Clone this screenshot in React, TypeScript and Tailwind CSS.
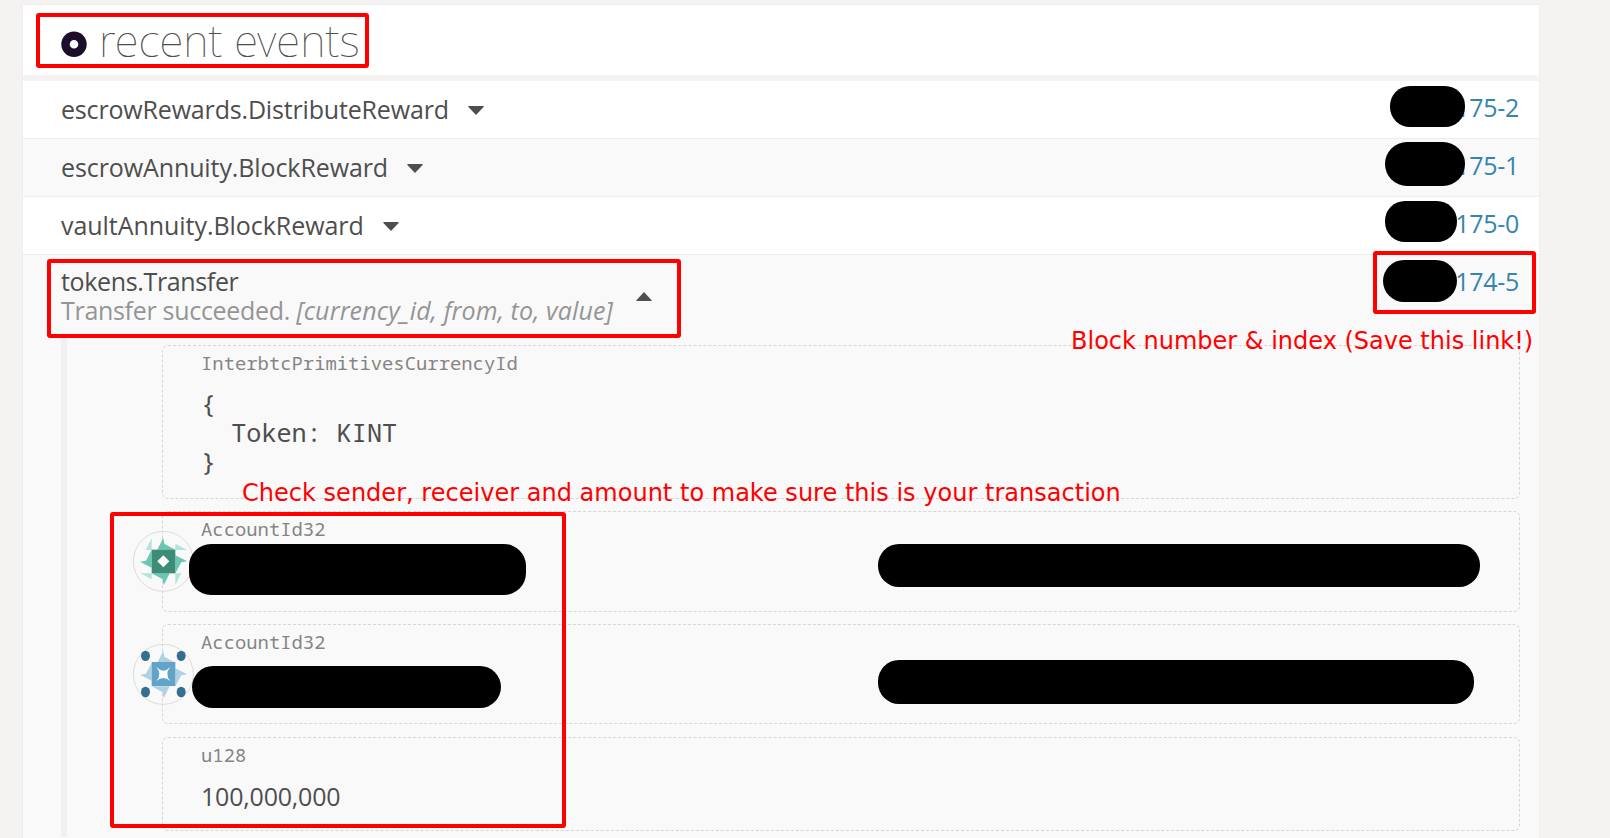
import type { ReactNode } from "react";

function Caret({ up = false }: { up?: boolean }) {
  return (
    <svg className="mt-[2px] h-[9px] w-[16px] shrink-0 fill-[#4e4e4e]" viewBox="0 0 16 9">
      <path d={up ? "M8 0 15.6 8.2V9H.4V8.2Z" : "M.4 0H15.6V.9L8 9 .4 .9Z"} />
    </svg>
  );
}

const pinwheel =
  "M100 29 103 47 136 65H82ZM172 100 154 103 136 136V82ZM101 172 98 154 65 136H119ZM30 101 48 98 65 65V119Z";

function SenderIcon() {
  return (
    <svg className="absolute top-[16px] -left-[33px] size-[66px]" viewBox="0 0 198 198">
      <circle cx="100" cy="100" r="90" fill="none" stroke="#dddddd" strokeWidth="3" />
      <path
        fill="#b2e5da"
        d="M65 30V66H47ZM136 47 171 66H136ZM136 136H154L136 171ZM31 136H65V154Z"
      />
      <path fill="#6bc6b4" d={pinwheel} />
      <path fill="#3d8c78" d="M65 65H136V136H65Z" />
      <path fill="#fff" d="M100 82 118 100 100 118 82 100Z" />
    </svg>
  );
}

function ReceiverIcon() {
  return (
    <svg className="absolute top-[16px] -left-[33px] size-[66px]" viewBox="0 0 198 198">
      <circle cx="100" cy="100" r="90" fill="none" stroke="#dddddd" strokeWidth="3" />
      <path fill="#b0d1e3" d={pinwheel} />
      <g fill="#356f8f">
        <ellipse cx="46.5" cy="44.5" rx="13.5" ry="15.5" />
        <ellipse cx="153.5" cy="44.5" rx="13.5" ry="15.5" />
        <ellipse cx="46.5" cy="153" rx="13.5" ry="15.5" />
        <ellipse cx="153.5" cy="153" rx="13.5" ry="15.5" />
      </g>
      <path fill="#62a3ca" d="M65 63H136V135H65Z" />
      <path
        fill="#fff"
        d="M79 78Q100 100 121 78Q103 99 121 121Q100 101 79 121Q97 99 79 78Z"
      />
    </svg>
  );
}

function BlockLink({ id, pillClass }: { id: string; pillClass: string }) {
  return (
    <div className="flex items-start">
      <div className={`z-10 shrink-0 bg-black ${pillClass}`} />
      <a className="w-[76px] pt-[12px] text-right tracking-[-0.3px] whitespace-nowrap text-[#3486af]">
        {id}
      </a>
    </div>
  );
}

function EventRow({
  name,
  nameClass,
  link,
  pillClass,
  odd = false,
}: {
  name: string;
  nameClass: string;
  link: string;
  pillClass: string;
  odd?: boolean;
}) {
  return (
    <div
      className={`flex h-[58px] justify-between border-b border-[#eeeeee] pr-[20px] pl-[38px] ${odd ? "bg-[#f9f9f9]" : "bg-white"}`}
    >
      <div className="flex items-center gap-[20px]">
        <span className={`shrink-0 whitespace-nowrap ${nameClass}`}>{name}</span>
        <Caret />
      </div>
      <BlockLink id={link} pillClass={pillClass} />
    </div>
  );
}

function Param({
  label,
  className,
  children,
}: {
  label: string;
  className: string;
  children?: ReactNode;
}) {
  return (
    <div
      className={`relative rounded-[6px] border border-dashed border-[#d6d6d6] pl-[38px] ${className}`}
    >
      <div className="pt-[5px] font-['Noto_Sans_Mono','DejaVu_Sans_Mono',monospace] text-[18.88px] leading-[25px] text-[#858585]">
        {label}
      </div>
      {children}
    </div>
  );
}

function Frame({ className }: { className: string }) {
  return <div className={`absolute rounded-[3px] border-4 border-[#ff0000] ${className}`} />;
}

export default function App() {
  return (
    <div className="relative h-[838px] w-[1610px] overflow-hidden bg-[#f4f3f1] pt-[5px] font-['Open_Sans','Noto_Sans',sans-serif] text-[25px] leading-[29px] text-[#4e4e4e]">
      <main className="ml-[23px] h-[833px] w-[1516px] bg-white shadow-[0_0_0_1px_#efeeed]">
        <header className="flex h-[70px] items-start gap-[12px] pl-[38px]">
          <svg className="mt-[26px] size-[26px]" viewBox="0 0 26 26">
            <circle cx="13" cy="13.3" r="8.5" fill="none" stroke="#1b0d2b" strokeWidth="8.4" />
          </svg>
          <h1 className="pt-[5px] font-['Noto_Sans',sans-serif] text-[44px] leading-[60px] font-thin tracking-[0.1px]">
            recent events
          </h1>
        </header>
        <div className="h-[6px] rounded-t-[4px] bg-[#f4f3f1]" />
        <EventRow
          name="escrowRewards.DistributeReward"
          nameClass="w-[387px] tracking-[-0.17px]"
          link=",175-2"
          pillClass="mt-[5px] mr-[-22px] h-[41px] w-[75px] rounded-[20px]"
        />
        <EventRow
          name="escrowAnnuity.BlockReward"
          nameClass="w-[326px] tracking-[-0.1px]"
          link=",175-1"
          pillClass="mt-[3px] mr-[-22px] h-[44px] w-[80px] rounded-[22px]"
          odd
        />
        <EventRow
          name="vaultAnnuity.BlockReward"
          nameClass="w-[302px] tracking-[-0.05px]"
          link=",175-0"
          pillClass="mt-[4px] mr-[-14px] h-[41px] w-[72px] rounded-[20px]"
        />
        <section className="h-[583px] bg-[#f9f9f9] pr-[19px] pl-[38px]">
          <div className="flex h-[83px] justify-between pr-px">
            <div className="flex items-start gap-[22px] pt-[12px]">
              <div className="w-[553px] whitespace-nowrap">
                <div className="tracking-[-0.35px]">tokens.Transfer</div>
                <div className="text-[#959595]">
                  <span className="tracking-[-0.3px]">Transfer succeeded. </span>
                  <em className="tracking-[0.12px]">[currency_id, from, to, value]</em>
                </div>
              </div>
              <div className="pt-[23px]">
                <Caret up />
              </div>
            </div>
            <BlockLink
              id=",174-5"
              pillClass="mt-[5px] mr-[-14px] h-[42px] w-[74px] rounded-[21px]"
            />
          </div>
          <div className="flex h-[499px] flex-col gap-[12px] border-l-[6px] border-[#f0f0f0] pt-[7px] pl-[95px]">
            <Param label="InterbtcPrimitivesCurrencyId" className="h-[154px]">
              <pre className="pt-[13px] font-['Noto_Sans_Mono','DejaVu_Sans_Mono',monospace] text-[25.15px] leading-[29px]">
                {"{\n  Token: KINT\n}"}
              </pre>
            </Param>
            <Param label="AccountId32" className="h-[101px]">
              <SenderIcon />
              <div className="relative ml-[-12px] flex items-start gap-[352px] pt-[2px]">
                <div className="h-[51px] w-[337px] rounded-[22px] bg-black" />
                <div className="h-[43px] w-[602px] rounded-[21px] bg-black" />
              </div>
            </Param>
            <Param label="AccountId32" className="h-[100px]">
              <ReceiverIcon />
              <div className="relative ml-[-9px] flex items-start gap-[377px] pt-[5px]">
                <div className="mt-[6px] h-[42px] w-[309px] rounded-[21px] bg-black" />
                <div className="h-[44px] w-[596px] rounded-[21px] bg-black" />
              </div>
            </Param>
            <Param label="u128" className="mt-px h-[94px]">
              <div className="pt-[14px] tracking-[-0.2px]">100,000,000</div>
            </Param>
          </div>
        </section>
      </main>

      <Frame className="top-[13px] left-[36px] h-[55px] w-[333px]" />
      <Frame className="top-[259px] left-[47px] h-[79px] w-[634px]" />
      <Frame className="top-[251px] left-[1373px] h-[63px] w-[163px]" />
      <Frame className="top-[512px] left-[110px] h-[316px] w-[456px]" />

      <p className="absolute top-[327px] left-[1071px] font-['DejaVu_Sans',sans-serif] text-[24px] whitespace-nowrap text-[#ff0000]">
        Block number &amp; index (Save this link!)
      </p>
      <p className="absolute top-[479px] left-[242px] font-['DejaVu_Sans',sans-serif] text-[24px] tracking-[0.02px] whitespace-nowrap text-[#ff0000]">
        Check sender, receiver and amount to make sure this is your transaction
      </p>
    </div>
  );
}
